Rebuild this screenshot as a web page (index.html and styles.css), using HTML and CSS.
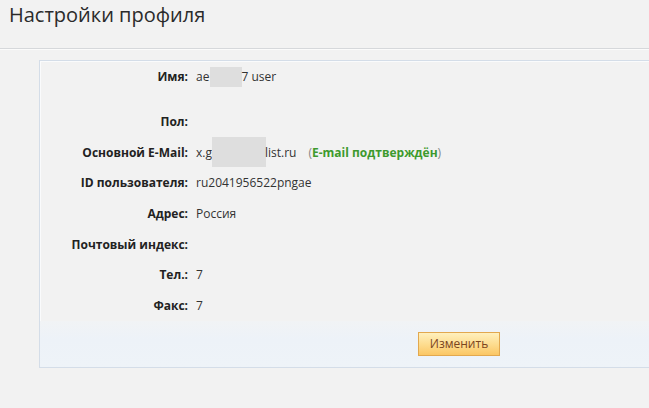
FILE: index.html
```html
<!DOCTYPE html>
<html lang="ru">
<head>
<meta charset="utf-8">
<title>Настройки профиля</title>
<link rel="stylesheet" href="styles.css">
</head>
<body>
<div class="page">
  <h1 class="title">Настройки профиля</h1>
  <div class="panel">
    <div class="rows">
      <div class="row row-first">
        <div class="label">Имя:</div>
        <div class="value">ae<span class="blur blur-name"></span>7 user</div>
      </div>
      <div class="row">
        <div class="label">Пол:</div>
        <div class="value"></div>
      </div>
      <div class="row">
        <div class="label">Основной E-Mail:</div>
        <div class="value">x.g<span class="blur blur-mail"></span>list.ru <span class="confirm">(<b>E-mail подтверждён</b>)</span></div>
      </div>
      <div class="row">
        <div class="label">ID пользователя:</div>
        <div class="value">ru2041956522pngae</div>
      </div>
      <div class="row">
        <div class="label">Адрес:</div>
        <div class="value">Россия</div>
      </div>
      <div class="row">
        <div class="label">Почтовый индекс:</div>
        <div class="value"></div>
      </div>
      <div class="row">
        <div class="label">Тел.:</div>
        <div class="value">7</div>
      </div>
      <div class="row">
        <div class="label">Факс:</div>
        <div class="value">7</div>
      </div>
    </div>
    <div class="footer">
      <button class="btn" type="button">Изменить</button>
    </div>
  </div>
</div>
</body>
</html>
```
FILE: styles.css
```css
html, body {
  margin: 0;
  padding: 0;
  background: #f2f2f2;
  font-family: "Open Sans", "DejaVu Sans", sans-serif;
  color: #222;
  overflow: hidden;
}
.page {
  width: 649px;
  height: 408px;
  overflow: hidden;
}
.title {
  margin: 0;
  height: 48px;
  padding: 0 0 0 9px;
  font-size: 20px;
  font-weight: normal;
  line-height: 30px;
  color: #2b2b2b;
  border-bottom: 1px solid #d6d8db;
  box-shadow: 0 1px 0 #fbfbfb;
}
.panel {
  margin: 11px 0 0 39px;
  width: 860px;
  border: 1px solid #d4dde8;
  box-shadow: inset 1px 1px 0 #fafbfc;
}
.rows {
  display: flex;
  flex-direction: column;
  padding-top: 1px;
}
.row {
  display: flex;
  align-items: center;
  height: 30.6px;
  font-size: 12px;
}
.row-first {
  height: 29px;
  margin-bottom: 15.5px;
}
.label {
  width: 148px;
  text-align: right;
  font-weight: bold;
  color: #222;
}
.value {
  margin-left: 8px;
  color: #333;
  white-space: nowrap;
  display: flex;
  align-items: center;
}
.blur {
  display: inline-block;
  background: #dedede;
}
.blur-name {
  width: 32px;
  height: 20px;
  margin-left: 1px;
  margin-right: -1px;
}
.blur-mail {
  width: 54px;
  height: 30px;
  margin-left: 0;
  margin-right: -1px;
}
.confirm {
  margin-left: 12px;
  color: #888;
}
.confirm b {
  color: #3d9a2d;
  font-weight: bold;
}
.footer {
  height: 46px;
  display: flex;
  align-items: center;
  background: linear-gradient(#f1f3f5, #edf2f8 40%, #eef3f8);
}
.btn {
  margin-left: 378px;
  width: 82px;
  height: 24px;
  padding: 0;
  font-family: "Open Sans", "DejaVu Sans", sans-serif;
  font-size: 12px;
  color: #7b4420;
  border: 1px solid #e2a84e;
  background: linear-gradient(#fff0bd, #fddb8c 55%, #fbc664);
  border-radius: 0;
}
```
